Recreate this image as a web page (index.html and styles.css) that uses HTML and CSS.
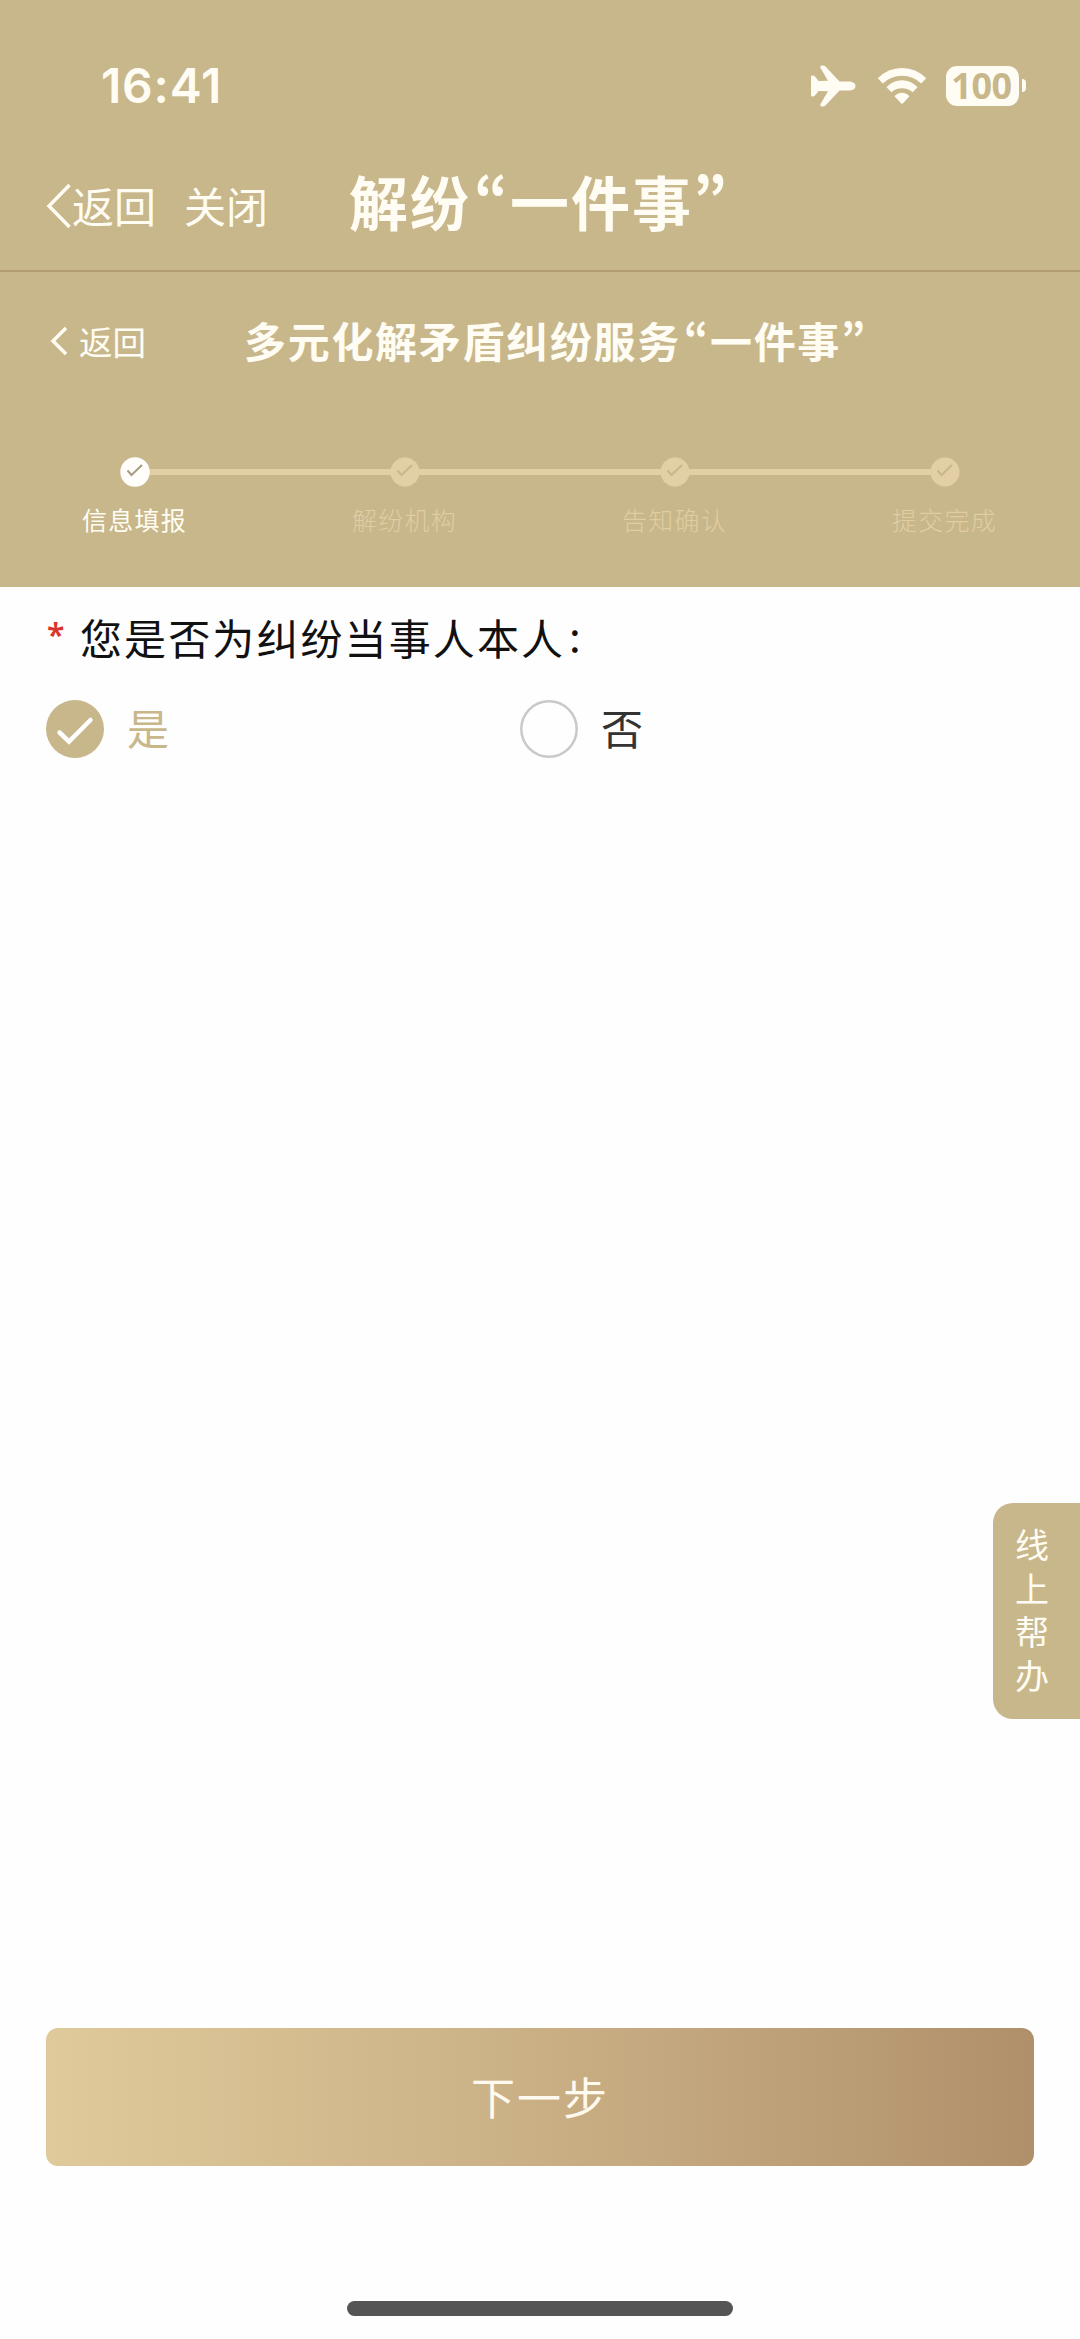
FILE: index.html
```html
<!DOCTYPE html>
<html lang="zh-CN">
<head>
<meta charset="utf-8">
<title>解纷“一件事”</title>
<link rel="stylesheet" href="styles.css">
</head>
<body>
<div class="screen">
  <header class="header">
    <div class="status">
      <span class="time">16:41</span>
      <div class="status-icons">
        <svg class="plane" width="46" height="42" viewBox="0 0 46 42"><path d="M1 11.500Q1 10.500 2.500 10.500q1.500 0 2.500 1L8.500 16l9.500-.300L10.500 3Q9.500.500 12 .500h1.500q1 0 2 1L29.500 16.500h10q6 .500 6 4.500t-6 4.500h-10L15.500 40.500q-1 1-2 1H12q-2.500 0-1.500-2.500L18 26.300 8.500 26 5 30.500q-1 1-2.500 1Q1 31.500 1 30.500z"/></svg>
        <svg class="wifi" width="50" height="38" viewBox="0 0 50 38"><path d="M0.800 11.300Q11 1 25 1t24.200 10.300l-5 5.200Q36 8.700 25 8.700T5.800 16.500zM9.500 20.200Q16 13.300 25 13.300t15.500 6.900l-5 5Q31.500 21.200 25 21.200t-10.500 4zM17.500 29.200Q20.500 25.700 25 25.700t7.500 3.500l-6.500 7q-1 1-2 0z"/></svg>
        <div class="battery"><span class="level">100</span><i class="tip"></i></div>
      </div>
    </div>
    <nav class="appbar">
      <svg class="chev-lg" width="26" height="46" viewBox="0 0 26 46"><path d="M23.500 2L3 23l20.500 21"/></svg>
      <span class="nav-text">返回</span>
      <span class="nav-text close">关闭</span>
      <h1 class="title">解纷<span class="q open">“</span>一件事<span class="q">”</span></h1>
    </nav>
    <div class="subbar">
      <svg class="chev-sm" width="18" height="30" viewBox="0 0 18 30"><path d="M16 2L3 15l13 13"/></svg>
      <span class="sub-back">返回</span>
      <h2 class="subtitle">多元化解矛盾纠纷服务<span class="q open">“</span>一件事<span class="q">”</span></h2>
    </div>
    <ol class="steps">
      <li class="step active"><svg class="dot" width="30" height="30" viewBox="0 0 30 30"><circle cx="15" cy="15" r="14.700"/><path d="M7.500 13.500l4 4.500L22 8"/></svg><span class="label">信息填报</span></li>
      <li class="step"><svg class="dot" width="30" height="30" viewBox="0 0 30 30"><circle cx="15" cy="15" r="14.500"/><path d="M7.500 13.500l4 4.500L22 8"/></svg><span class="label">解纷机构</span></li>
      <li class="step"><svg class="dot" width="30" height="30" viewBox="0 0 30 30"><circle cx="15" cy="15" r="14.500"/><path d="M7.500 13.500l4 4.500L22 8"/></svg><span class="label">告知确认</span></li>
      <li class="step"><svg class="dot" width="30" height="30" viewBox="0 0 30 30"><circle cx="15" cy="15" r="14.500"/><path d="M7.500 13.500l4 4.500L22 8"/></svg><span class="label">提交完成</span></li>
    </ol>
  </header>
  <main class="content">
    <div class="question"><span class="star">*</span><span class="question-text">您是否为纠纷当事人本人<span class="colon">:</span></span></div>
    <div class="options">
      <div class="option checked"><svg class="radio" width="58" height="58" viewBox="0 0 58 58"><circle cx="29" cy="29" r="29"/><path d="M13.500 32.500l9.500 9L44.500 20"/></svg><span class="choice">是</span></div>
      <div class="option"><svg class="radio" width="58" height="58" viewBox="0 0 58 58"><circle cx="29" cy="29" r="27.700"/></svg><span class="choice">否</span></div>
    </div>
  </main>
  <footer class="footer">
    <div class="next">下一步</div>
    <div class="home"></div>
  </footer>
  <aside class="helper">线上帮办</aside>
</div>
</body>
</html>
```
FILE: styles.css
```css
* { box-sizing: border-box; }
body, h1, h2, ol { margin: 0; padding: 0; }
body {
  font-family: "Noto Sans CJK SC", sans-serif;
  background: #fefefe;
}
.screen {
  position: relative;
  width: 1080px;
  height: 2339px;
  display: flex;
  flex-direction: column;
  overflow: hidden;
}
.header {
  height: 587px;
  background: #c8b78b;
  color: #fffdf3;
}
.status {
  height: 140px;
  padding: 30px 54px 0 101px;
  display: flex;
  justify-content: space-between;
}
.time {
  font: 600 48px/112px Inter, sans-serif;
  letter-spacing: 0.8px;
}
.status-icons {
  display: flex;
  align-items: center;
  height: 111px;
  fill: #fffdf3;
}
.plane { margin-right: 21px; }
.wifi { margin-right: 19px; }
.battery { display: flex; align-items: center; gap: 3px; }
.level {
  width: 73px;
  height: 40px;
  border-radius: 11px;
  background: #fffdf3;
  color: #c8b78b;
  font: 700 36px/40px "Noto Sans", sans-serif;
  letter-spacing: -0.5px;
  padding-right: 2px;
  text-align: center;
}
.tip {
  width: 4px;
  height: 13px;
  border-radius: 0 5px 5px 0;
  background: #fffdf3;
}
.appbar {
  height: 132px;
  padding: 2px 0 0 46px;
  border-bottom: 2px solid #b19d6f;
  display: flex;
  align-items: center;
}
.chev-lg, .chev-sm { fill: none; stroke: #fffdf3; stroke-width: 3.5; }
.nav-text { margin-top: -2px; font-size: 42px; line-height: 60px; }
.close { margin-left: 28px; }
.title {
  margin: -10px 0 0 81px;
  font-size: 59px;
  line-height: 80px;
  letter-spacing: 2px;
  white-space: nowrap;
}
.q { font-feature-settings: "pwid"; }
.open { margin-left: 3px; }
.subbar {
  height: 142px;
  padding: 0 0 4px 50px;
  display: flex;
  align-items: center;
}
.sub-back { margin: -2px 0 0 11px; font-size: 33.5px; }
.subtitle {
  margin: -2px 0 0 98px;
  font-size: 42px;
  line-height: 60px;
  letter-spacing: 1.7px;
  white-space: nowrap;
}
.steps {
  list-style: none;
  display: grid;
  grid-template-columns: repeat(4, 1fr);
  padding-top: 43px;
}
.step {
  display: flex;
  flex-direction: column;
  align-items: center;
  gap: 13px;
  background: linear-gradient(#e2cfa5, #e2cfa5) no-repeat 0 12px / 100% 6px;
  color: #e0cda2;
}
.step:first-child { background-position: 135px 12px; }
.step:last-child { background-size: 135px 6px; }
.dot { display: block; fill: #e2cfa5; }
.dot path { fill: none; stroke: #c8b78b; stroke-width: 2; }
.label { margin-right: 1px; font-size: 25px; line-height: 38px; letter-spacing: 1.3px; font-weight: 300; }
.active { color: #fffdf3; }
.active .dot { fill: #fffefa; }
.active .dot path { stroke: #a79d83; }
.active .label { font-weight: 400; }
.content { flex: 1; padding: 18px 46px; }
.question { display: flex; height: 64px; line-height: 64px; color: #111; }
.star { width: 34px; padding-left: 1px; color: #d9352c; font: 600 32px/60px "Noto Sans", sans-serif; }
.question-text { font-size: 42px; letter-spacing: 2.1px; }
.colon { margin-left: 4px; vertical-align: 3px; line-height: 1; }
.options { display: grid; grid-template-columns: 474px 1fr; margin-top: 31px; }
.option { display: flex; align-items: center; gap: 23px; font-size: 42px; line-height: 54px; color: #333; }
.option.checked { color: #c8b78b; }
.choice { padding-bottom: 4px; }
.radio { fill: none; stroke: #c9c9c9; stroke-width: 2.5; }
.checked .radio { fill: #c8b78b; stroke: none; }
.checked .radio path { fill: none; stroke: #fff; stroke-width: 4.5; stroke-linecap: round; stroke-linejoin: miter; }
.footer {
  height: 311px;
  padding: 0 46px;
  display: flex;
  flex-direction: column;
  align-items: center;
}
.next {
  width: 100%;
  height: 138px;
  border-radius: 12px;
  background: linear-gradient(90deg, #dfca9b, #c9ae84 52%, #b0906b);
  color: #fffaf0;
  text-align: center;
  font-size: 44px;
  line-height: 136px;
  letter-spacing: 2px;
}
.home {
  width: 386px;
  height: 15px;
  margin-top: 135px;
  border-radius: 8px;
  background: #555;
}
.helper {
  position: absolute;
  right: 0;
  top: 1503px;
  width: 87px;
  height: 216px;
  padding: 19px 31px 0 22px;
  border-radius: 20px 0 0 20px;
  background: #c8b78b;
  color: #fffdf3;
  font-size: 34px;
  line-height: 43.5px;
  word-break: break-all;
}
```
